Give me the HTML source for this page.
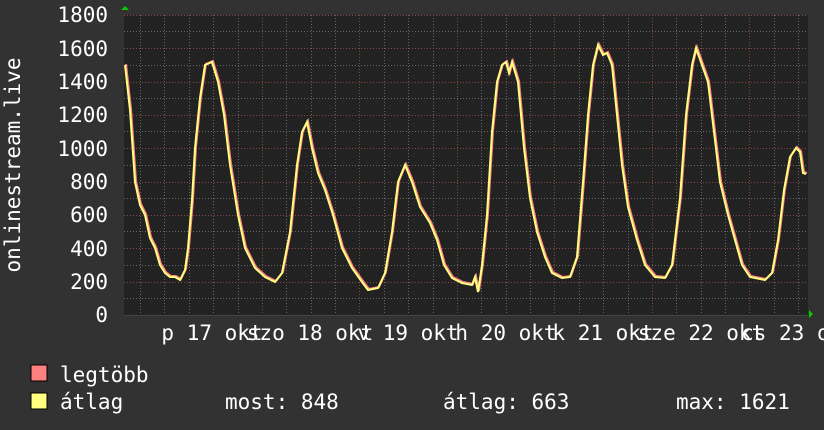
<!DOCTYPE html>
<html><head><meta charset="utf-8"><style>
html,body{margin:0;padding:0;background:#333;}
svg{display:block}
text{font-family:"DejaVu Sans Mono","Liberation Mono",monospace;font-size:21px;fill:#fff}
</style></head><body>
<svg width="824" height="430" viewBox="0 0 824 430" xmlns="http://www.w3.org/2000/svg">
<rect width="824" height="430" fill="#323232"/>
<rect x="124" y="15" width="684" height="300" fill="#222"/>
<g stroke="#666" stroke-width="1" stroke-dasharray="1,2">
<path d="M124 31.5H808M124 65.5H808M124 98.5H808M124 131.5H808M124 165.5H808M124 198.5H808M124 231.5H808M124 265.5H808M124 298.5H808"/>
<path d="M140.5 15V315M164.5 15V315M189.5 15V315M213.5 15V315M238.5 15V315M286.5 15V315M311.5 15V315M335.5 15V315M384.5 15V315M408.5 15V315M433.5 15V315M481.5 15V315M506.5 15V315M530.5 15V315M579.5 15V315M603.5 15V315M628.5 15V315M676.5 15V315M701.5 15V315M725.5 15V315M774.5 15V315M798.5 15V315"/>
</g>
<g stroke="#8a4545" stroke-width="1" stroke-dasharray="1,2">
<path d="M124 15.5H808M124 48.5H808M124 82.5H808M124 115.5H808M124 148.5H808M124 182.5H808M124 215.5H808M124 248.5H808M124 282.5H808"/>
<path d="M262.5 15V315M359.5 15V315M457.5 15V315M554.5 15V315M652.5 15V315M749.5 15V315"/>
</g>
<path d="M124 315.5H808" stroke="#444"/>
<path d="M121 10L125 6L129 10Z" fill="#0c0"/>
<path d="M809 310L813 314L809 318Z" fill="#0c0"/>
<g transform="translate(1,-1)">
<polyline fill="none" stroke="#ff7f7f" stroke-width="2" points="125,65 130,110 135,182 140,205 145,215 150,238 155,248 160,265 165,273 170,277 175,277 180,280 185,270 188,248 192,200 195,148 200,98 205,65 212,62 218,82 224,115 230,165 238,215 245,248 255,268 265,277 275,282 282,273 290,232 297,165 302,132 307,122 312,148 318,173 325,190 333,215 342,248 352,268 362,282 368,290 378,288 385,273 392,232 398,182 405,165 412,182 420,207 430,223 437,240 444,265 452,278 462,283 472,285 475,277 478,292 482,265 487,215 492,132 497,82 502,65 506,62 509,73 512,62 518,82 524,148 530,198 537,232 545,257 552,273 562,278 570,277 577,257 583,182 588,115 593,65 598,45 603,55 607,53 612,65 617,115 622,165 628,207 637,240 645,265 655,277 665,278 672,265 680,198 686,115 692,65 696,48 702,65 708,82 714,132 720,182 728,215 735,240 742,265 750,277 765,280 772,273 778,240 784,190 790,157 796,148 800,152 803,173 806,174"/>
</g>
<polyline fill="none" stroke="#ffff80" stroke-width="2" points="125,65 130,110 135,182 140,205 145,215 150,238 155,248 160,265 165,273 170,277 175,277 180,280 185,270 188,248 192,200 195,148 200,98 205,65 212,62 218,82 224,115 230,165 238,215 245,248 255,268 265,277 275,282 282,273 290,232 297,165 302,132 307,122 312,148 318,173 325,190 333,215 342,248 352,268 362,282 368,290 378,288 385,273 392,232 398,182 405,165 412,182 420,207 430,223 437,240 444,265 452,278 462,283 472,285 475,277 478,292 482,265 487,215 492,132 497,82 502,65 506,62 509,73 512,62 518,82 524,148 530,198 537,232 545,257 552,273 562,278 570,277 577,257 583,182 588,115 593,65 598,45 603,55 607,53 612,65 617,115 622,165 628,207 637,240 645,265 655,277 665,278 672,265 680,198 686,115 692,65 696,48 702,65 708,82 714,132 720,182 728,215 735,240 742,265 750,277 765,280 772,273 778,240 784,190 790,157 796,148 800,152 803,173 806,174"/>
<g text-anchor="end">
<text x="108" y="22">1800</text><text x="108" y="56">1600</text><text x="108" y="89">1400</text><text x="108" y="122">1200</text><text x="108" y="156">1000</text><text x="108" y="189">800</text><text x="108" y="222">600</text><text x="108" y="256">400</text><text x="108" y="289">200</text><text x="108" y="322">0</text>
</g>
<text transform="translate(20,165) rotate(-90)" text-anchor="middle">onlinestream.live</text>
<g text-anchor="middle">
<text x="212" y="340">p 17 okt</text><text x="310" y="340">szo 18 okt</text><text x="408" y="340">v 19 okt</text><text x="506" y="340">h 20 okt</text><text x="603" y="340">k 21 okt</text><text x="701" y="340">sze 22 okt</text><text x="798" y="340">cs 23 okt</text>
</g>
<rect x="31" y="365" width="16" height="16" fill="#ff8080" stroke="#000"/>
<rect x="31" y="393" width="16" height="16" fill="#ffff80" stroke="#000"/>
<text x="60" y="382">legtöbb</text>
<text x="60" y="409">átlag</text>
<text x="225" y="409">most: 848</text>
<text x="443" y="409">átlag: 663</text>
<text x="676" y="409">max: 1621</text>
</svg>
</body></html>
